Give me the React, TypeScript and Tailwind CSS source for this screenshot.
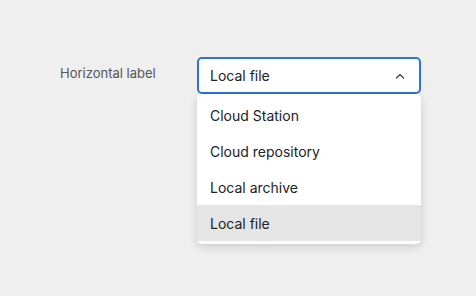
export default function App() {
  const options = ['Cloud Station', 'Cloud repository', 'Local archive', 'Local file'];
  const selected = 'Local file';

  return (
    <div
      className="h-[296px] w-[476px] bg-[#efefef] pl-[60px] pt-[57px]"
      style={{ fontFamily: 'Inter, "Noto Sans", sans-serif' }}
    >
      <div className="flex items-start">
        <label className="mt-[7px] w-[137px] text-[13px] leading-[18px] text-[#555]">Horizontal label</label>
        <div className="relative w-[224px]">
          <button className="flex h-[37px] w-full items-center justify-between rounded-[5px] border-2 border-[#2b73d6] bg-white pl-[11px] pr-[14px] text-left text-[14px] text-[#222]">
            <span>{selected}</span>
            <svg width="10" height="6" viewBox="0 0 10 6" fill="none">
              <path d="M1.5 5L5 1.5L8.5 5" stroke="#444" strokeWidth="1.4" strokeLinecap="round" strokeLinejoin="round" />
            </svg>
          </button>
          <ul className="absolute left-0 top-[37px] w-full rounded-[5px] bg-white pb-[3px] pt-[3px] shadow-[0_3px_10px_rgba(0,0,0,0.15)]">
            {options.map((o) => (
              <li
                key={o}
                className={`flex h-[36px] items-center pl-[13px] text-[14px] text-[#222] ${
                  o === selected ? 'bg-[#e5e5e5]' : ''
                }`}
              >
                {o}
              </li>
            ))}
          </ul>
        </div>
      </div>
    </div>
  );
}
